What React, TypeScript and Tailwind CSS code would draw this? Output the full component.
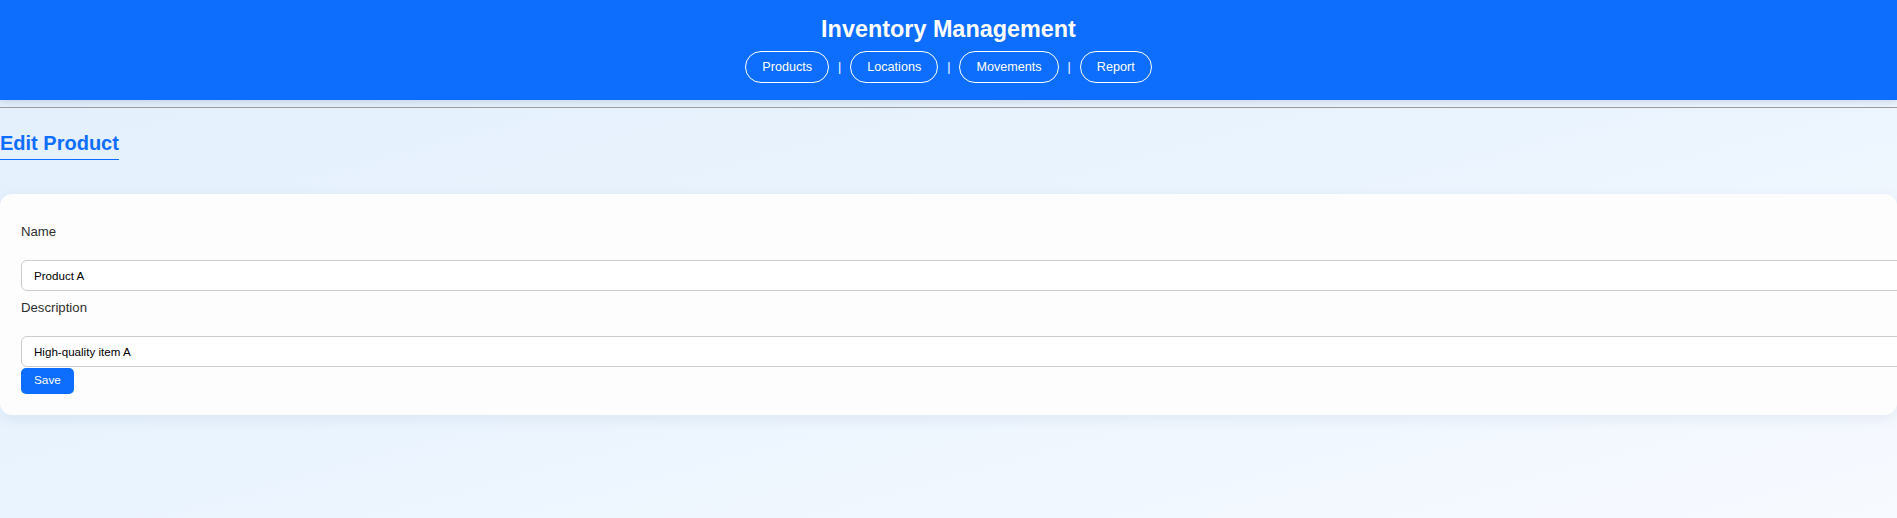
import React from 'react';

const navLinks = ['Products', 'Locations', 'Movements', 'Report'];

const fields = [
    { label: 'Name', value: 'Product A' },
    { label: 'Description', value: 'High-quality item A' },
];

const App = () => {
    return (
        <div className="min-h-[518px] w-full overflow-hidden bg-linear-to-br from-[#e2effc] via-[#eaf4fe] to-[#f7faff] font-['Liberation_Sans',Arial,sans-serif]">
            <header className="relative z-10 h-[100px] bg-[#0d6efd] pt-[15px] text-center text-white shadow-[0_2px_7px_rgba(60,80,110,0.18)]">
                <h1 className="text-[23.4px] font-bold leading-[28px]">Inventory Management</h1>
                <nav className="mt-[8px] flex items-center justify-center gap-[9px]">
                    {navLinks.map((link, i) => (
                        <React.Fragment key={link}>
                            {i > 0 && <span className="text-[12.5px]">|</span>}
                            <a className="flex h-[32px] items-center rounded-full border border-white px-4 text-[12.6px]">
                                {link}
                            </a>
                        </React.Fragment>
                    ))}
                </nav>
            </header>

            <div className="mt-[7px] h-px bg-[#9d9d9d]" />

            <main>
                <h2 className="mt-[23px] inline-block border-b border-[#0d6efd] pb-[4px] text-[20px] font-bold leading-[24px] text-[#0d6efd]">
                    Edit Product
                </h2>

                <form className="mt-[34px] w-full rounded-xl bg-[#fdfdfd] p-[21px] shadow-[0_4px_14px_rgba(40,70,110,0.08)]">
                    {fields.map((field) => (
                        <div key={field.label}>
                            <label className="mt-[7px] mb-[18px] block text-[13.2px] leading-[20px] text-[#2f2f2f]">
                                {field.label}
                            </label>
                            <input
                                defaultValue={field.value}
                                className="box-content block h-[29px] w-full rounded-md border border-[#cccccc] bg-white px-[12px] text-[11.6px] text-black outline-none"
                            />
                        </div>
                    ))}
                    <button
                        type="button"
                        className="mt-px h-[26px] rounded-[5px] bg-[#0d6efd] px-[13px] text-[11.8px] text-white"
                    >
                        Save
                    </button>
                </form>
            </main>
        </div>
    );
};

export default App;
